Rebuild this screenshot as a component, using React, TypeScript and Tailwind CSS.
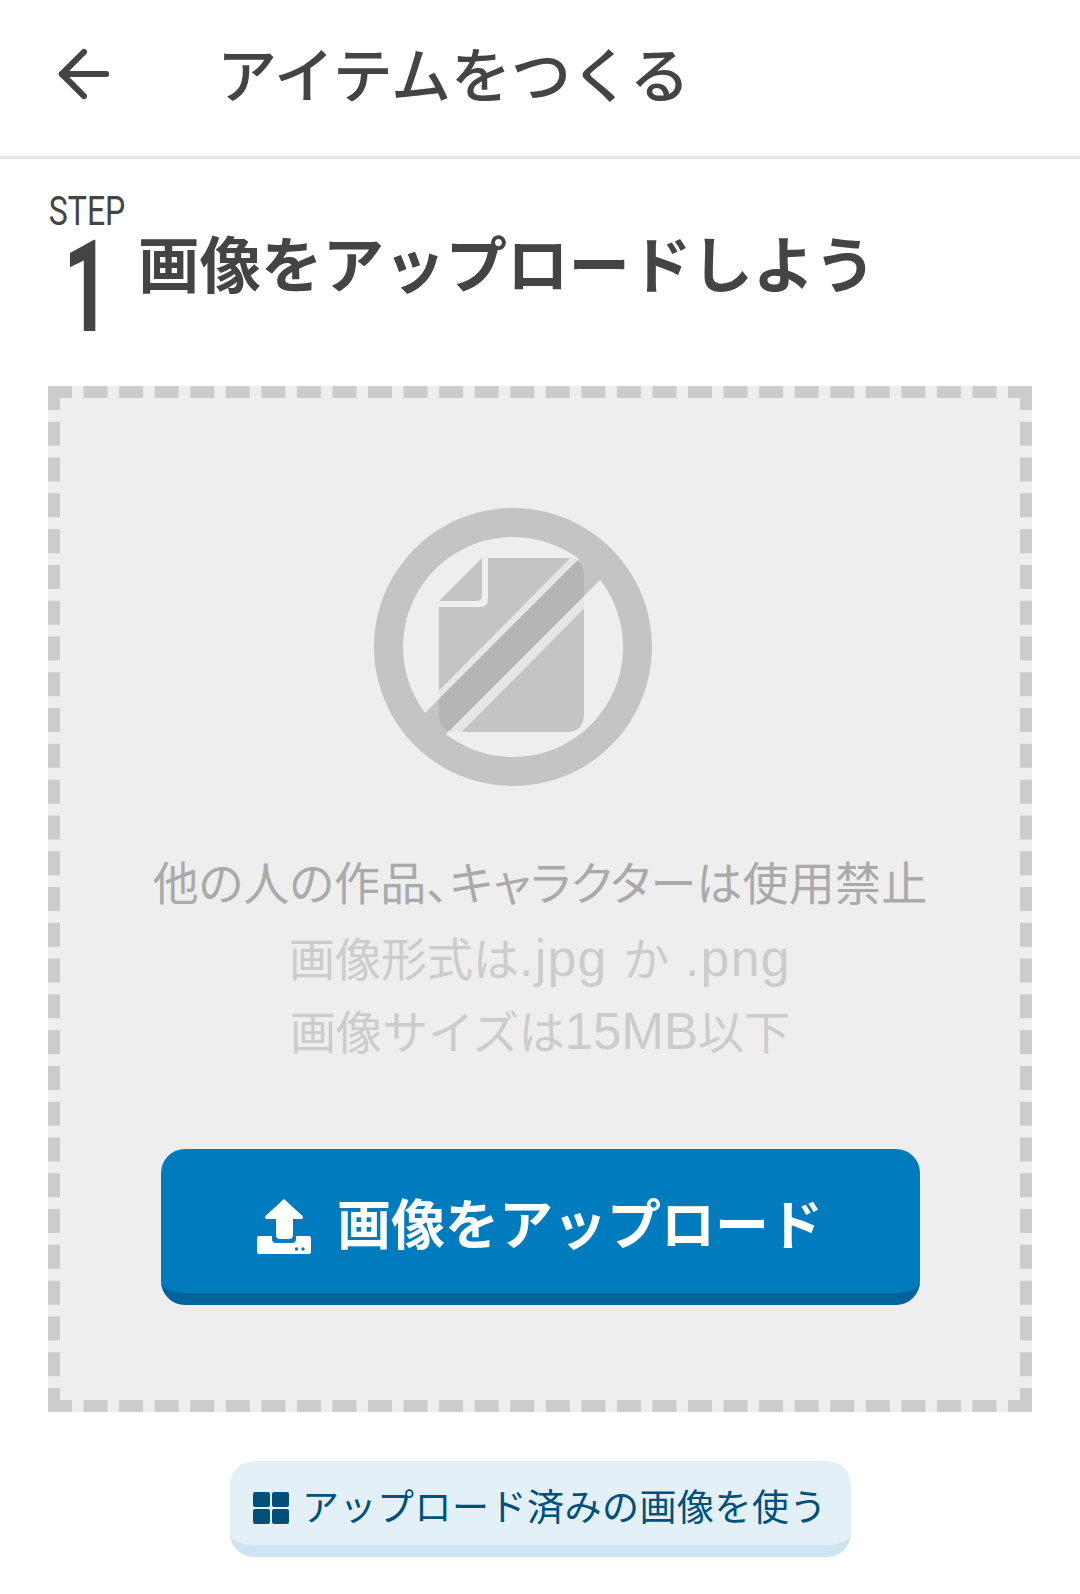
import { ArrowLeft } from "lucide-react";

const jp = "font-['Liberation_Sans','Noto_Sans_CJK_JP',sans-serif]";

const filePath =
  "M488 558 H566 Q584 558 584 576 V714 Q584 732 566 732 H457 Q439 732 439 714 V607 H480 Q488 607 488 599 Z";

function NoFileIcon() {
  return (
    <svg viewBox="374 508 278 278" className="w-[278px] h-[278px]">
      <defs>
        <clipPath id="file-clip">
          <path d={filePath} />
        </clipPath>
      </defs>
      <path d="M482 558 V595 Q482 601 476 601 H439 Z" fill="#c4c4c4" />
      <path d={filePath} fill="#c4c4c4" />
      <path d="M600 528 L632 560 L430 764 L398 732 Z" fill="#e6e6e6" clipPath="url(#file-clip)" />
      <path d="M592 546 L613 567 L433 747 L412 726 Z" fill="#c4c4c4" />
      <path d="M592 546 L613 567 L433 747 L412 726 Z" fill="#b5b5b5" clipPath="url(#file-clip)" />
      <path
        fillRule="evenodd"
        d="M513 508 A139 139 0 1 1 512.9 508 Z M513 537 A110 110 0 1 0 513.1 537 Z"
        fill="#c4c4c4"
      />
    </svg>
  );
}

function UploadIcon() {
  return (
    <svg viewBox="0 0 54 55" className="w-[54px] h-[55px] shrink-0" fill="white">
      <path d="M27 0 L45.5 17 Q47 20 44 20 H36 V36 Q36 40 32 40 H23 Q19 40 19 36 V20 H10 Q7 20 8.5 17 Z" />
      <path d="M2 37 H15 V40 Q15 44 19 44 H35 Q39 44 39 40 V37 H52 Q54 37 54 39 V53 Q54 55 52 55 H2 Q0 55 0 53 V39 Q0 37 2 37 Z" />
      <circle cx="39.5" cy="50" r="1.7" fill="#007bbd" />
      <circle cx="46" cy="50" r="1.7" fill="#007bbd" />
    </svg>
  );
}

export default function App() {
  return (
    <div className={`w-[1080px] h-[1594px] bg-white text-[#444] ${jp}`}>
      <header className="h-[159px] border-b-[3px] border-[#e5e5e5] flex items-center pl-[46px] pb-[8px]">
        <ArrowLeft className="w-[76px] h-[76px] text-[#444]" strokeWidth={1.9} />
        <h1 className="ml-[95px] mt-[7px] text-[60px] leading-none font-medium">アイテムをつくる</h1>
      </header>

      <div className="px-12">
        <div className="flex h-[227px] pt-[30px]">
          <div className="w-[90px] flex flex-col font-['Roboto',sans-serif] whitespace-nowrap">
            <span className="inline-block origin-left scale-x-[0.8] text-[40px] leading-[46px] pl-[1px]">STEP</span>
            <span className="inline-block origin-left scale-x-[0.64] text-[128px] leading-[104px] font-bold pl-[24px]">1</span>
          </div>
          <h2 className="mt-[42px] text-[61.5px] leading-[72px] font-bold">画像をアップロードしよう</h2>
        </div>

        <div className="h-[1026px] border-[12px] border-dashed border-[#ccc] bg-[#eee] flex flex-col items-center">
          <div className="mt-[110px] ml-[-54px]">
            <NoFileIcon />
          </div>
          <div className="mt-[61px] flex flex-col items-center text-[46px] leading-[74px] whitespace-nowrap">
            <p className="h-[74px] text-[#aaa] tracking-[0.2px] [font-feature-settings:'palt']">他の人の作品、キャラクターは使用禁止</p>
            <p className="h-[74px] text-[#ccc]">
              画像形式は<span className="text-[52px] tracking-[1.2px]">.jpg </span>か<span className="text-[52px] tracking-[1.2px]"> .png</span>
            </p>
            <p className="h-[74px] text-[#ccc]">
              画像サイズは<span className="text-[51px]">15MB</span>以下
            </p>
          </div>
          <button className="mt-[80px] w-[759px] h-[156px] rounded-[24px] bg-[#007bbd] border-b-[12px] border-[#00649c] flex items-center justify-center gap-[26px] pt-[10px] text-white">
            <UploadIcon />
            <span className="text-[54px] font-bold leading-none">画像をアップロード</span>
          </button>
        </div>

        <div className="flex justify-center mt-[49px]">
          <button className="w-[621px] h-[96px] rounded-[24px] bg-[#e4f0f8] border-b-[12px] border-[#cfe4f0] flex items-center justify-center gap-[13px] pt-[10px] text-[#00507c]">
            <span className="grid grid-cols-2 gap-[2px] w-[36px] h-[32px]">
              <i className="bg-[#00507c] rounded-[2px]" />
              <i className="bg-[#00507c] rounded-[2px]" />
              <i className="bg-[#00507c] rounded-[2px]" />
              <i className="bg-[#00507c] rounded-[2px]" />
            </span>
            <span className="text-[37px] leading-none tracking-[0.5px]">アップロード済みの画像を使う</span>
          </button>
        </div>
      </div>
    </div>
  );
}
